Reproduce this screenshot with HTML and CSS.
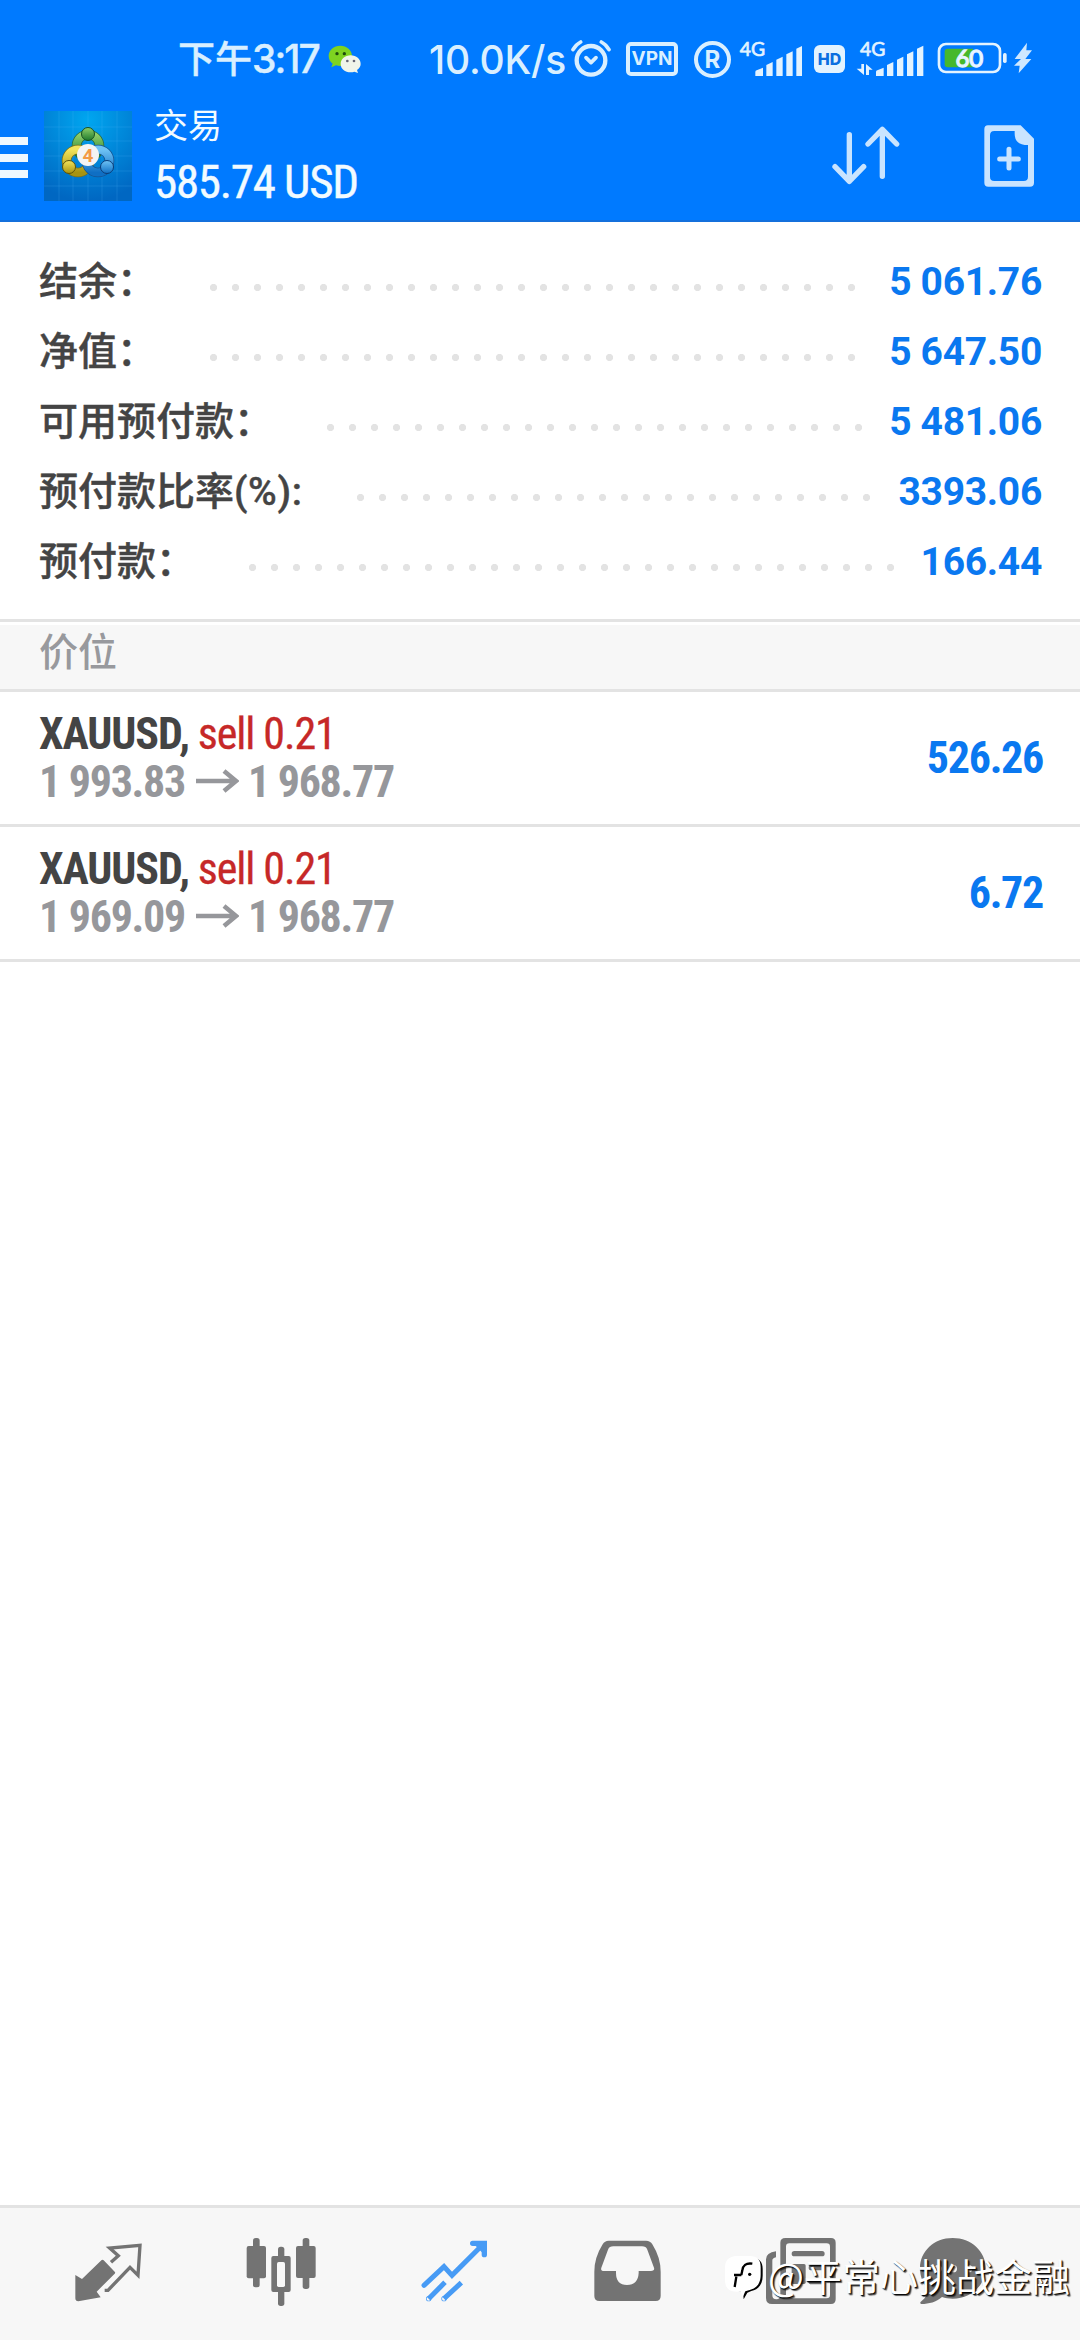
FILE: index.html
```html
<!DOCTYPE html>
<html lang="zh-CN">
<head>
  <meta charset="UTF-8" />
  <meta name="viewport" content="width=device-width, initial-scale=1.0"/>
  <title>交易</title>
  <link rel="stylesheet" href="styles.css">
</head>
<body>
  <div class="app">
    <header class="header">
      <!-- Status bar -->
      <div class="status">
        <span class="time">下午<b>3:17</b></span>
        <svg class="wechat" width="33" height="28" viewBox="985 134 99 84">
          <path fill="#7ed321" d="M1022 136c-20 0-35 14-35 31 0 10 5 18 12 23l-4 11 14-6c4 1 8 2 13 2 19 0 35-13 35-30s-16-31-35-31z"/>
          <path fill="#f0f5ea" d="M1053 165c-17 0-30 11-30 26s13 25 30 25c4 0 8-1 11-2l11 4-3-9c7-4 11-11 11-18 0-15-13-26-30-26z"/>
          <circle cx="1012" cy="160" r="5" fill="#1f4d0c"/><circle cx="1034" cy="160" r="5" fill="#1f4d0c"/>
          <circle cx="1043" cy="182" r="4" fill="#667"/><circle cx="1063" cy="182" r="4" fill="#667"/>
        </svg>
        <span class="speed">10.0K/s</span>
        <svg class="alarm" width="40" height="38" viewBox="512 120 120 114" fill="none" stroke="#d9efff" stroke-linecap="round" stroke-linejoin="round">
          <circle cx="572" cy="181" r="43" stroke-width="13"/>
          <path d="M557 173l15 15 15-15" stroke-width="11"/>
          <path d="M518 149q8-15 23-23M626 149q-8-15-23-23" stroke-width="11"/>
        </svg>
        <span class="vpn">VPN</span>
        <span class="reg">R</span>
        <svg class="signal" width="65" height="46" viewBox="-12 102 195 138" fill="#e3f3ff">
          <text x="-4" y="164" font-size="58">4G</text>
          <path d="M43 225v-12q0-4 4-5l19-8v25zM76 225v-33l19-9v42zM106 225v-49l19-9v58zM136 225v-65l19-9v74zM166 225v-82l19-9v91z"/>
        </svg>
        <span class="hd">HD</span>
        <svg class="signal2" width="69" height="46" viewBox="346 102 207 138" fill="#e3f3ff">
          <text x="358" y="164" font-size="58">4G</text>
          <path d="M362 189h8v33l-22-19h14zM376 222v-33l20 17h-11v16z"/>
          <path d="M406 225v-12q0-4 4-5l19-8v25zM439 225v-33l19-9v42zM469 225v-49l19-9v58zM499 225v-65l19-9v74zM529 225v-82l19-9v91z"/>
        </svg>
        <svg class="battery" width="96" height="36" viewBox="588 126 288 108">
          <rect x="594" y="135" width="183" height="84" rx="21" fill="none" stroke="#e3f3ff" stroke-width="8"/>
          <path d="M620 149h76v56h-76q-9 0-9-9v-38q0-9 9-9z" fill="#46b82c"/>
          <rect x="786" y="162" width="11" height="30" rx="5" fill="#e3f3ff"/>
          <text x="685" y="205" font-size="72" text-anchor="middle" fill="#f4fbff">60</text>
          <path d="M858 131l-37 49h19l-21 20h17l-3 23 38-43h-18l20-26h-17z" fill="#cfe8ff"/>
        </svg>
      </div>

      <!-- Title bar -->
      <div class="toolbar">
        <div class="menu"><i></i><i></i><i></i></div>
        <svg class="logo" width="88" height="90" viewBox="0 0 88 90">
          <defs>
            <radialGradient id="bg" cx="50%" cy="10%" r="90%"><stop offset="0" stop-color="#00a6f0"/><stop offset="1" stop-color="#0067c2"/></radialGradient>
            <linearGradient id="gr" x1="0" y1="0" x2="0" y2="1"><stop offset="0" stop-color="#8fcf6a"/><stop offset="1" stop-color="#1e7a2c"/></linearGradient>
            <linearGradient id="ye" x1="0" y1="0" x2="0" y2="1"><stop offset="0" stop-color="#f3e45c"/><stop offset="1" stop-color="#a79310"/></linearGradient>
            <linearGradient id="bl" x1="0" y1="0" x2="0" y2="1"><stop offset="0" stop-color="#6fc3f5"/><stop offset="1" stop-color="#0f6fc4"/></linearGradient>
          </defs>
          <rect width="88" height="90" fill="url(#bg)"/>
          <path d="M15 0v90M29 0v90M44 0v90M58 0v90M73 0v90M0 16h88M0 30h88M0 45h88M0 60h88M0 75h88" stroke="#5ac4ff" stroke-opacity=".18" fill="none"/>
          <g fill="none" stroke-width="8">
            <circle cx="44" cy="35" r="11.5" stroke="#2a6a3a" stroke-width="9.5"/><circle cx="44" cy="35" r="11.5" stroke="url(#gr)"/>
            <circle cx="34" cy="50" r="11.5" stroke="#77701a" stroke-width="9.5"/><circle cx="34" cy="50" r="11.5" stroke="url(#ye)"/>
            <circle cx="54" cy="50" r="11.5" stroke="#155493" stroke-width="9.5"/><circle cx="54" cy="50" r="11.5" stroke="url(#bl)"/>
          </g>
          <circle cx="44" cy="23" r="6.5" fill="url(#gr)" stroke="#174f22"/>
          <circle cx="25" cy="56" r="6.5" fill="url(#ye)" stroke="#5c5108"/>
          <circle cx="63" cy="56" r="6.5" fill="url(#bl)" stroke="#0b3d78"/>
          <circle cx="44" cy="44" r="11" fill="#f4f4f4"/>
          <text x="44" y="51" font-size="19" font-weight="700" text-anchor="middle" fill="#f39a45">4</text>
        </svg>
        <div class="title">
          <span class="page-name">交易</span>
          <span class="profit">585.74 USD</span>
        </div>
        <svg class="sort" width="68" height="60" viewBox="274 378 204 180" fill="none" stroke="#c9e4ff" stroke-width="16" stroke-linecap="round" stroke-linejoin="round">
          <path d="M326 404v140M283 500l43 44 43-44M425 529V388M382 432l43-44 43 44"/>
        </svg>
        <svg class="new-order" width="50" height="62" viewBox="729 375 150 186">
          <path fill="#c9e4ff" fill-rule="evenodd" d="M741 376h98l40 40v132q0 12-12 12H742q-12 0-12-12V388q0-12 11-12zM760 393q-13 0-13 13v124q0 13 13 13h88q13 0 13-13v-95h-10q-30-4-30-34v-8z"/>
          <path d="M804 448v56M776 477h56" stroke="#c9e4ff" stroke-width="15" stroke-linecap="round"/>
        </svg>
      </div>
    </header>

    <!-- Account summary -->
    <section class="summary">
      <div class="line"><span class="label">结余：</span><span class="dots"></span><span class="value">5 061.76</span></div>
      <div class="line"><span class="label">净值：</span><span class="dots"></span><span class="value">5 647.50</span></div>
      <div class="line"><span class="label">可用预付款：</span><span class="dots"></span><span class="value">5 481.06</span></div>
      <div class="line"><span class="label">预付款比率<em>(%):</em></span><span class="dots"></span><span class="value">3393.06</span></div>
      <div class="line"><span class="label">预付款：</span><span class="dots"></span><span class="value">166.44</span></div>
    </section>

    <!-- Open positions -->
    <h2 class="section-title">价位</h2>
    <div class="position">
      <div class="info">
        <div class="symbol"><b>XAUUSD,</b> <span class="sell">sell 0.21</span></div>
        <div class="prices">1 993.83<svg class="arrow" width="43" height="24" viewBox="0 0 43 24"><path d="M0 12h40M28 2l12 10-12 10" fill="none" stroke="#96979b" stroke-width="4.5"/></svg>1 968.77</div>
      </div>
      <div class="result">526.26</div>
    </div>
    <div class="position">
      <div class="info">
        <div class="symbol"><b>XAUUSD,</b> <span class="sell">sell 0.21</span></div>
        <div class="prices">1 969.09<svg class="arrow" width="43" height="24" viewBox="0 0 43 24"><path d="M0 12h40M28 2l12 10-12 10" fill="none" stroke="#96979b" stroke-width="4.5"/></svg>1 968.77</div>
      </div>
      <div class="result">6.72</div>
    </div>

    <!-- Bottom navigation -->
    <nav class="tabs">
      <svg width="173" height="132" viewBox="66 54 519 396">
        <path fill="#737373" d="M305 210q3-2 6 1l33 34q3 3 0 6l-54 54 12 17-67 12q-9 0-9-9v-70l20 12z"/>
        <path fill="none" stroke="#737373" stroke-width="10" d="M333 217l22-20-26-23 91-8-6 90-24-24-66 69h-10"/>
      </svg>
      <svg width="173" height="132" viewBox="585 54 519 396">
        <g fill="#737373">
          <rect x="759" y="144" width="20" height="148" rx="8"/><rect x="740" y="168" width="58" height="97" rx="6"/>
          <rect x="908" y="144" width="20" height="153" rx="8"/><rect x="888" y="168" width="59" height="96" rx="6"/>
          <rect x="834" y="170" width="19" height="178" rx="8"/><rect x="814" y="198" width="58" height="108" rx="6"/>
        </g>
        <rect x="831" y="216" width="24" height="75" rx="5" fill="#f7f7f7"/>
      </svg>
      <svg width="173" height="132" viewBox="24 54 519 396" fill="none" stroke="#479bf5" stroke-width="15">
        <path d="M192 286l60-56 24 26 92-92" stroke-linecap="round"/>
        <path d="M338 160h35v34" stroke-width="16" stroke-linecap="round"/>
        <path d="M350 167l17 17V167z" fill="#479bf5" stroke-width="6"/>
        <path d="M206 326l49-49M252 326l52-48"/>
        <circle cx="206" cy="326" r="1" stroke-width="14"/><circle cx="252" cy="326" r="1" stroke-width="14"/>
      </svg>
      <svg width="173" height="132" viewBox="543 54 519 396">
        <path fill="#737373" fill-rule="evenodd" d="M746 152h112q13 0 19 11 25 40 25 82v73q0 15-15 15H718q-15 0-15-15v-73q0-42 25-82 6-11 18-11zM760 169q-12 0-16 10l-20 54q-3 10 8 10h36v6q0 36 33 36t35-36v-6h37q12 0 9-10l-20-54q-4-10-16-10z"/>
      </svg>
      <svg width="173" height="132" viewBox="42 54 519 396">
        <path fill="#737373" fill-rule="evenodd" d="M256 144h137q14 0 14 14v170q0 14-14 14H216q-18 0-18-18V208q0-20 30-24v18q-11 2-11 10v104q0 12 12 12t12-12V158q0-14 15-14zM268 160q-10 0-10 10v144l-4 11h126q10 0 10-10V170q0-10-10-10z"/>
        <path stroke="#737373" stroke-width="16" stroke-linecap="round" d="M283 191h83M334 233h32M334 275h32"/>
        <rect x="275" y="222" width="42" height="60" rx="5" fill="#737373"/>
      </svg>
      <svg width="132" height="132" viewBox="561 54 396 396">
        <path fill="#737373" d="M758 144c56 0 99 40 99 90s-43 92-99 92c-12 0-22-1-32-5-18 15-38 21-62 21-5-1-4-5 0-8 14-11 20-23 20-36-15-16-24-38-24-64 0-50 42-90 98-90z"/>
        <g fill="#f7f7f7"><circle cx="714" cy="236" r="11"/><circle cx="760" cy="236" r="11"/><circle cx="806" cy="236" r="11"/></g>
      </svg>
      <div class="watermark">
        <svg width="44" height="48" viewBox="72 206 132 144">
          <path d="M114 217h40c24 0 34 12 34 34v20c0 26-12 41-34 46l-12 5-11 20-2-22-18-4z" fill="#000"/>
          <path d="M110 212h38c24 0 34 11 34 34v22c0 26-12 41-33 46l-13 4-8 18-6-17h-12c-24 0-35-12-35-36v-34c0-24 11-36 35-37z" fill="#fff"/>
          <path d="M157 235c-20-3-28 6-30 20l-3 14M124 269h-22M109 274l-5 31" fill="none" stroke="#000" stroke-width="7"/>
          <circle cx="149" cy="267" r="5" fill="#000"/>
        </svg>
        <span>@平常心挑战金融</span>
      </div>
    </nav>
  </div>
</body>
</html>
```
FILE: styles.css
```css
* {
  box-sizing: border-box;
  margin: 0;
  padding: 0;
}
body {
  background-color: #fff;
  color: #444;
  font-family: Roboto, "Noto Sans CJK SC", sans-serif;
}
svg {
  display: block;
  flex: none;
}
.app {
  width: 1080px;
  height: 2340px;
  display: flex;
  flex-direction: column;
  overflow: hidden;
}

/* Header */
.header {
  height: 222px;
  background-color: #007aff;
  border-bottom: 2px solid #1470dc;
}
.status {
  display: flex;
  align-items: center;
  height: 100px;
  padding: 18px 0 0 178px;
  color: #d9efff;
  font-family: Inter, "Noto Sans CJK SC", sans-serif;
  white-space: nowrap;
}
.time {
  width: 150px;
  font-size: 37px;
  font-weight: 500;
  line-height: 50px;
  -webkit-text-stroke: 0.4px;
}
.time b {
  font-size: 39px;
  font-weight: 500;
  letter-spacing: -2px;
}
.speed {
  width: 142px;
  margin-left: 68px;
  font-size: 39px;
  font-weight: 500;
  letter-spacing: -0.2px;
}
.vpn {
  width: 52px;
  height: 34px;
  margin-left: 15px;
  border: 4px solid #d9efff;
  border-radius: 5px;
  font-size: 19px;
  font-weight: 700;
  line-height: 26px;
  text-align: center;
}
.reg {
  width: 37px;
  height: 37px;
  margin-left: 16px;
  border: 4px solid #d9efff;
  border-radius: 50%;
  font-size: 24px;
  font-weight: 700;
  line-height: 29px;
  text-align: center;
}
.signal {
  margin-left: 6px;
  margin-top: -2px;
}
.signal text,
.signal2 text,
.battery text {
  font-family: Lato, sans-serif;
  stroke: #e3f3ff;
  stroke-width: 2px;
}
.battery text {
  stroke-width: 4px;
}
.hd {
  width: 31px;
  height: 28px;
  margin-left: 12px;
  border-radius: 6px;
  background-color: #e3f3ff;
  color: #0a6ee0;
  font-size: 16px;
  font-weight: 800;
  line-height: 28px;
  text-align: center;
}
.signal2 {
  margin-left: 11px;
  margin-top: -2px;
}
.battery {
  margin-left: 12px;
}
.toolbar {
  display: flex;
  align-items: flex-start;
  height: 120px;
}
.menu {
  width: 28px;
  margin-top: 37px;
}
.menu i {
  display: block;
  height: 8px;
  margin-bottom: 8.5px;
  background-color: #eef8ff;
}
.logo {
  margin: 11px 0 0 16px;
}
.title {
  width: 678px;
  margin-left: 22px;
  color: #f2fbff;
}
.page-name {
  display: block;
  height: 50px;
  font-size: 34px;
  line-height: 52px;
}
.profit {
  display: block;
  font-family: "Roboto Condensed", Roboto, sans-serif;
  font-stretch: 75%;
  font-size: 47px;
  line-height: 64px;
  letter-spacing: -1.3px;
  -webkit-text-stroke: 0.4px;
}
.sort {
  margin-top: 26px;
}
.new-order {
  margin: 25px 0 0 84px;
}

/* Account summary */
.summary {
  height: 400px;
  padding: 24px 38px 0 39px;
  border-bottom: 3px solid #e3e3e3;
}
.line {
  display: flex;
  height: 70px;
  line-height: 73px;
  font-size: 39px;
}
.label {
  font-weight: 500;
  -webkit-text-stroke: 0.4px;
}
.label em {
  font-style: normal;
  letter-spacing: 0.6px;
}
.dots {
  flex: 1;
  height: 8px;
  margin: 38px 19px 0 54px;
  background: radial-gradient(circle at 3.5px 3.5px, #e3e3e3 3.2px, transparent 4px) 0 0 / 22px 8px repeat-x;
}
.value {
  color: #0a78f0;
  font-weight: 700;
  letter-spacing: -0.3px;
}

/* Open positions */
.section-title {
  height: 67px;
  margin-top: 3px;
  padding-left: 39px;
  border-bottom: 3px solid #e3e3e3;
  background-color: #f7f7f7;
  color: #98999d;
  font-size: 39px;
  font-weight: 500;
  line-height: 57px;
}
.position {
  display: flex;
  justify-content: space-between;
  align-items: center;
  height: 135px;
  padding: 0 37px 0 39px;
  border-bottom: 3px solid #e3e3e3;
  font-family: "Roboto Condensed", Roboto, sans-serif;
  font-stretch: 75%;
  font-size: 44px;
  line-height: 48px;
  letter-spacing: -1.1px;
}
.sell {
  color: #c62828;
  -webkit-text-stroke: 0.3px;
}
.prices {
  display: flex;
  align-items: center;
  color: #96979b;
  font-weight: 700;
  letter-spacing: -1.3px;
}
.arrow {
  margin: -3px 9px 0 11px;
}
.result {
  color: #0a78f0;
  font-weight: 700;
  letter-spacing: -1.3px;
}

/* Bottom navigation */
.tabs {
  position: relative;
  display: flex;
  height: 135px;
  margin-top: auto;
  padding-left: 22px;
  border-top: 3px solid #e3e3e3;
  background-color: #f7f7f7;
}
.watermark {
  position: absolute;
  left: 724px;
  top: 46px;
  display: flex;
  align-items: center;
  color: #fff;
  font-family: "Noto Sans CJK SC", sans-serif;
  font-size: 38px;
  line-height: 42px;
  text-shadow: 1px 1px 1px #000, 2px 2px 1px rgba(0, 0, 0, 0.6);
  white-space: nowrap;
}
.watermark span {
  margin: -6px 0 0 0;
}
```
